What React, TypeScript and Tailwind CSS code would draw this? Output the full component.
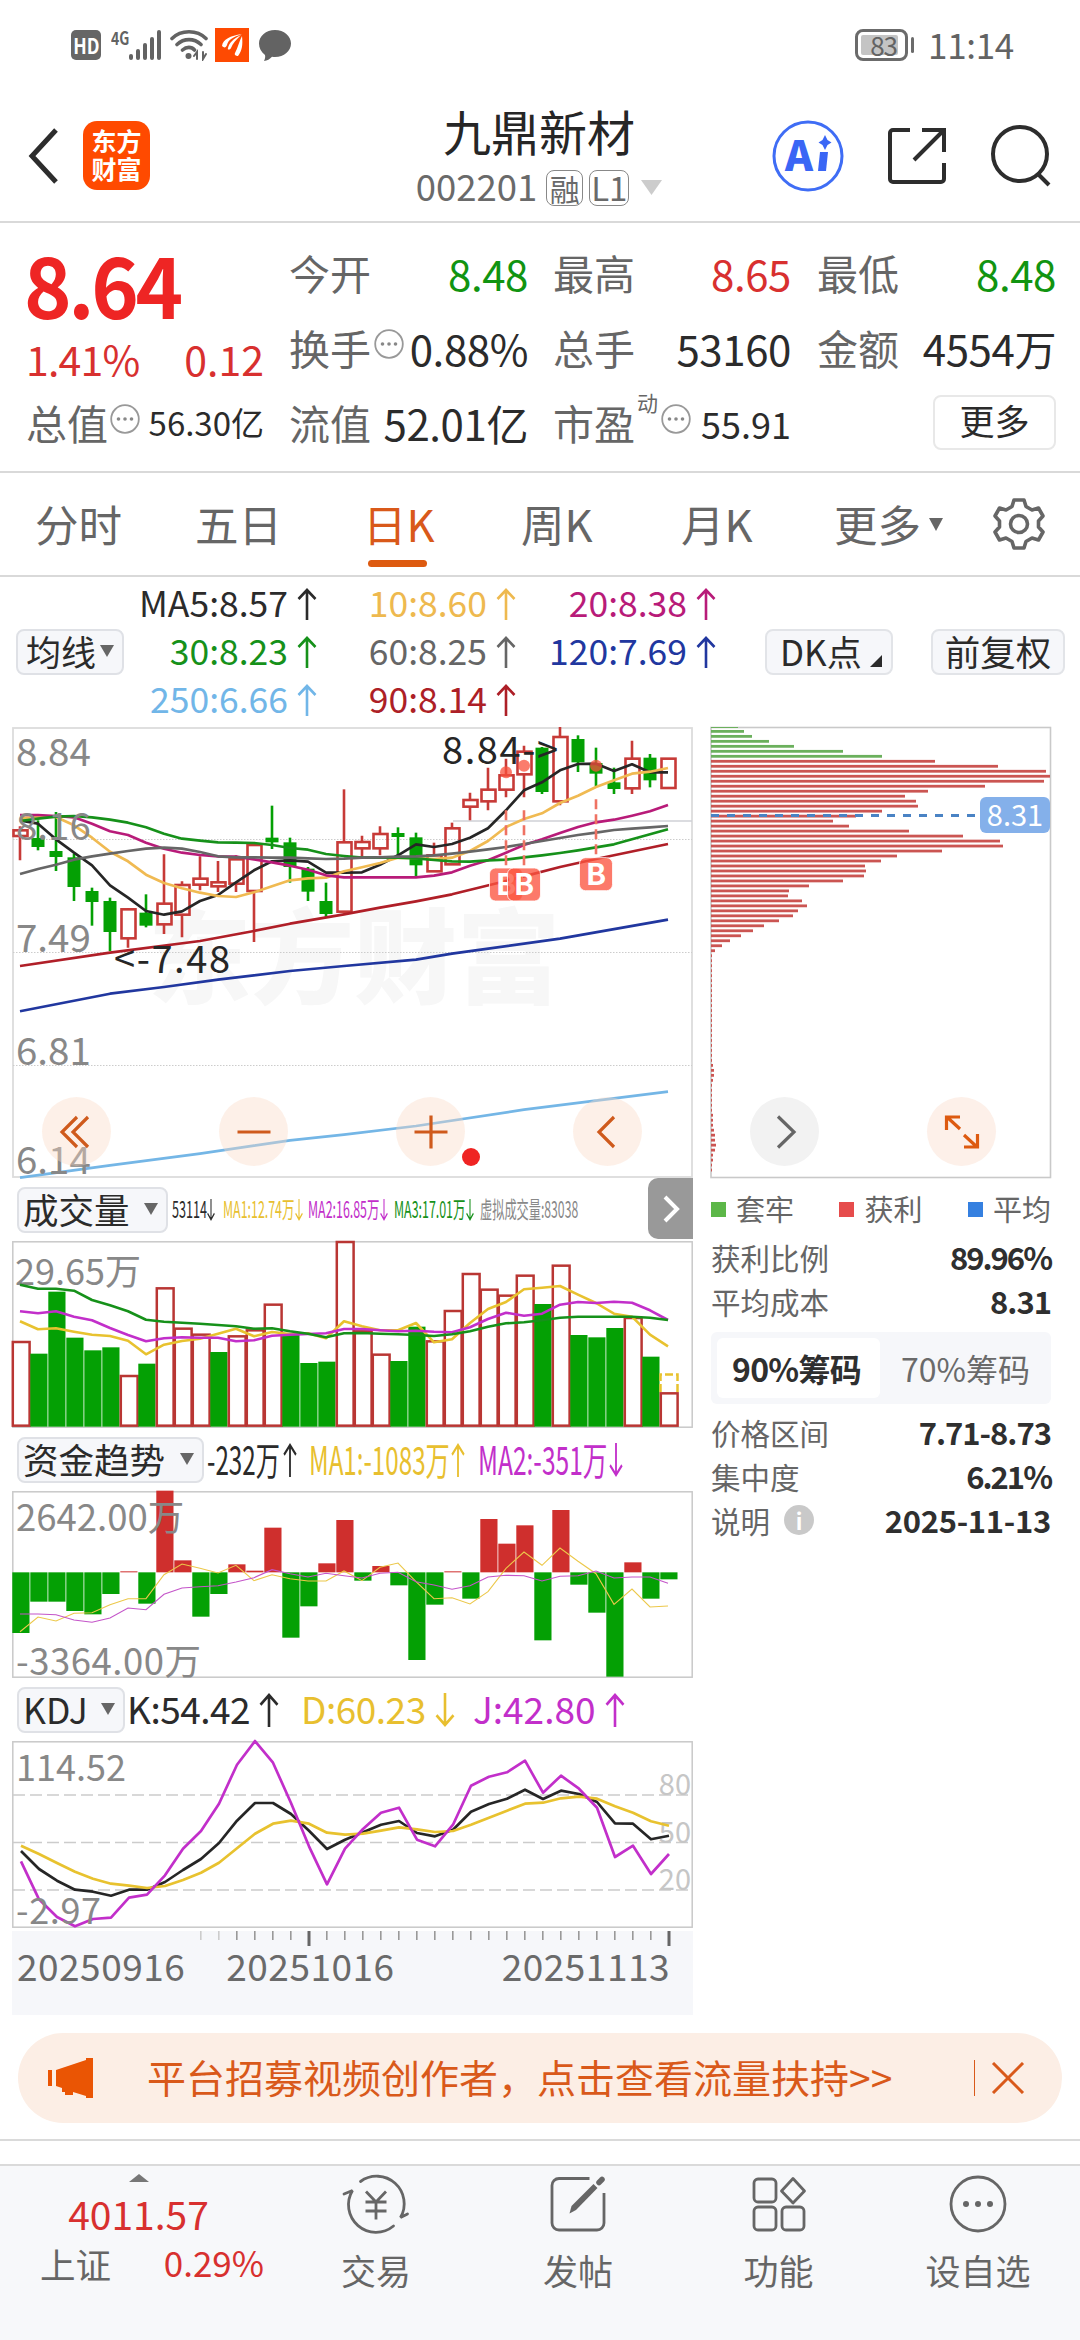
import type { ReactNode } from 'react';
import clsx from 'clsx';

const RED = '#c73a37';
const GREEN = '#04a004';
const STEP = 18;

// Chart samples are stored in thirds of a pixel, measured from an offset per chart
const scaleY = (v: number, top: number) => (v - top) / 3;
const scaleX = (i: number, x0 = 8) => x0 + i * STEP;

function toPoints(values: number[], top: number, x0?: number) {
  return values.map((v, i) => `${scaleX(i, x0)},${scaleY(v, top).toFixed(1)}`).join(' ');
}

function pairsToPoints(pairs: [number, number][], top: number) {
  return pairs.map(([i, v]) => `${scaleX(i)},${scaleY(v, top).toFixed(1)}`).join(' ');
}

// direction, high, body top, body bottom, low
type Candle = ['r' | 'g', number, number, number, number];

const candles: Candle[] = [
  ['r', 318, 330, 347, 420], ['g', 300, 353, 380, 390], ['g', 275, 392, 410, 452], ['g', 400, 411, 500, 542],
  ['g', 502, 512, 545, 616], ['g', 532, 542, 635, 692], ['r', 564, 567, 654, 682], ['g', 522, 577, 616, 621],
  ['r', 402, 550, 612, 641], ['r', 483, 494, 583, 651], ['r', 408, 475, 493, 510], ['r', 422, 486, 498, 515],
  ['r', 405, 417, 490, 515], ['r', 372, 374, 512, 665], ['g', 256, 352, 366, 386], ['g', 352, 366, 440, 487],
  ['g', 440, 445, 514, 542], ['g', 487, 542, 581, 592], ['r', 207, 366, 574, 574], ['r', 346, 365, 384, 410],
  ['r', 318, 341, 384, 405], ['g', 321, 338, 350, 405], ['g', 337, 351, 435, 467], ['r', 367, 405, 453, 453],
  ['r', 307, 324, 432, 432], ['r', 217, 239, 259, 300], ['r', 142, 208, 243, 270], ['r', 115, 165, 208, 231],
  ['r', 76, 94, 162, 231], ['g', 80, 82, 215, 221], ['r', 20, 50, 243, 255], ['g', 45, 56, 126, 155],
  ['g', 82, 128, 160, 198], ['g', 142, 186, 206, 221], ['r', 61, 115, 204, 221], ['g', 101, 112, 180, 201],
  ['r', 114, 115, 203, 203],
];

const ma5 = [300, 310, 357, 397, 435, 495, 532, 572, 583, 573, 542, 524, 486, 450, 423, 420, 424, 457, 457, 456, 433, 405, 372, 380, 371, 352, 324, 270, 210, 186, 150, 131, 130, 152, 132, 156, 156];
const ma10 = [293, 290, 290, 315, 352, 394, 423, 463, 488, 504, 517, 527, 530, 516, 498, 480, 474, 472, 453, 441, 428, 412, 413, 416, 412, 392, 362, 320, 296, 279, 248, 226, 200, 180, 160, 154, 143];
const ma20 = [284, 284, 287, 291, 310, 333, 344, 367, 385, 397, 404, 408, 409, 417, 426, 436, 448, 465, 471, 471, 471, 471, 471, 466, 456, 436, 420, 397, 374, 357, 338, 320, 306, 298, 286, 273, 254];
const ma30 = [302, 295, 289, 287, 291, 298, 307, 321, 340, 355, 361, 366, 367, 368, 374, 383, 388, 401, 407, 412, 411, 412, 414, 419, 423, 424, 420, 418, 411, 405, 398, 390, 381, 372, 357, 342, 327];
const ma60 = [461, 446, 433, 418, 408, 400, 392, 385, 382, 385, 395, 408, 411, 411, 412, 412, 414, 416, 415, 412, 411, 409, 408, 405, 400, 394, 387, 380, 371, 362, 353, 344, 337, 329, 325, 321, 317];
const ma90: [number, number][] = [[0, 737], [5, 697], [10, 662], [13, 632], [15, 610], [18, 582], [20, 562], [22, 543], [24, 522], [27, 482], [30, 440], [32, 416], [33, 405], [36, 371]];
const ma120: [number, number][] = [[0, 873], [5, 820], [8, 800], [11, 778], [15, 752], [18, 737], [22, 718], [24, 700], [30, 655], [36, 598]];
const ma250: [number, number][] = [[0, 1372], [5, 1335], [10, 1300], [13, 1276], [15, 1260], [18, 1243], [22, 1217], [28, 1168], [33, 1134], [36, 1114]];

const volumes: ['r' | 'g', number][] = [
  ['r', 487], ['g', 522], ['g', 336], ['g', 474], ['g', 512], ['g', 503], ['r', 589], ['g', 552], ['r', 326], ['r', 447],
  ['r', 465], ['g', 517], ['r', 470], ['r', 452], ['r', 375], ['g', 463], ['g', 550], ['g', 546], ['r', 187], ['r', 455],
  ['r', 525], ['g', 544], ['g', 441], ['r', 485], ['r', 394], ['r', 283], ['r', 330], ['r', 348], ['r', 288], ['g', 373],
  ['r', 258], ['g', 466], ['g', 473], ['g', 445], ['r', 415], ['g', 531], ['r', 641],
];
const volMa1 = [425, 449, 446, 456, 465, 469, 483, 524, 495, 484, 477, 462, 447, 470, 457, 463, 461, 476, 425, 440, 452, 452, 430, 488, 479, 430, 388, 367, 329, 324, 319, 345, 370, 402, 411, 465, 500];
const volMa2 = [395, 401, 395, 411, 422, 445, 466, 485, 476, 473, 474, 474, 485, 482, 468, 465, 463, 461, 448, 448, 452, 455, 453, 456, 458, 443, 418, 399, 408, 402, 375, 367, 370, 366, 369, 392, 421];
const volMa3 = [315, 327, 327, 333, 361, 377, 395, 420, 426, 429, 432, 436, 440, 447, 446, 455, 462, 473, 461, 460, 462, 464, 466, 469, 464, 455, 441, 431, 428, 422, 414, 411, 411, 411, 411, 414, 421];

const FUND_ZERO = 308;
const funds = [490, 396, 396, 424, 434, 373, 305, 402, 63, 272, 441, 373, 284, 303, 174, 504, 410, 281, 151, 333, 289, 347, 571, 405, 305, 387, 148, 222, 167, 512, 121, 345, 429, 621, 278, 387, 329];
const fundMa1 = [486, 442, 454, 431, 429, 405, 387, 387, 315, 283, 296, 310, 287, 333, 315, 327, 334, 334, 304, 333, 293, 280, 336, 387, 384, 403, 366, 296, 247, 287, 235, 275, 312, 404, 358, 412, 409];
const fundMa2 = [433, 433, 435, 451, 458, 445, 415, 420, 374, 355, 351, 348, 337, 324, 300, 312, 322, 311, 318, 325, 311, 308, 336, 346, 359, 348, 322, 317, 318, 334, 320, 318, 304, 325, 322, 322, 341];

const kLine = [484, 538, 573, 600, 606, 618, 600, 600, 577, 541, 508, 460, 393, 340, 340, 373, 423, 478, 450, 428, 405, 394, 430, 440, 420, 366, 343, 327, 300, 328, 303, 313, 337, 401, 402, 449, 438];
const dLine = [468, 493, 520, 546, 567, 582, 588, 595, 589, 571, 549, 519, 476, 432, 402, 393, 402, 429, 435, 432, 423, 413, 419, 427, 424, 405, 384, 363, 342, 339, 326, 321, 327, 350, 369, 395, 408];
const jLine = [515, 629, 682, 710, 688, 684, 624, 615, 557, 477, 424, 342, 225, 154, 219, 340, 470, 584, 477, 418, 369, 354, 450, 470, 405, 288, 261, 248, 213, 309, 258, 297, 354, 502, 468, 553, 493];

const chips = [
  27, 33, 41, 58, 83, 132, 171, 224, 287, 335, 339, 333, 274, 217, 194, 205, 207, 171, 145, 122, 138, 198, 252, 289, 292,
  231, 186, 170, 154, 155, 153, 132, 98, 78, 77, 91, 96, 87, 82, 68, 53, 42, 30, 19, 11, 4,
  1, 1, 1, 1, 1, 1, 1, 1, 1, 1, 1, 1, 1, 1, 1, 1, 1, 1, 1, 1, 1, 1, 2, 3, 3, 2, 1, 1, 1, 1, 1, 1, 2, 2, 2, 3, 4, 4, 5, 4, 2, 2, 1, 1,
];

function Arrow({ down, className }: { down?: boolean; className?: string }) {
  return (
    <svg viewBox="0 0 20 32" preserveAspectRatio="none" className={clsx('shrink-0', down && 'rotate-180', className ?? 'h-8 w-5')} fill="none" stroke="currentColor" strokeWidth="2.6">
      <path d="M10 32V2M1.5 11 10 2l8.5 9" />
    </svg>
  );
}

function Caret({ className }: { className?: string }) {
  return (
    <svg viewBox="0 0 14 12" preserveAspectRatio="none" className={clsx('shrink-0', className ?? 'h-3 w-3.5 text-[#666]')} fill="currentColor">
      <path d="M0 0h14L7 12z" />
    </svg>
  );
}

function MoreDots() {
  return (
    <svg viewBox="0 0 30 30" className="h-[30px] w-[30px] shrink-0" fill="none" stroke="#999" strokeWidth="1.8">
      <circle cx="15" cy="15" r="13.8" />
      <g fill="#888" stroke="none">
        <circle cx="8.5" cy="15" r="1.8" />
        <circle cx="15" cy="15" r="1.8" />
        <circle cx="21.5" cy="15" r="1.8" />
      </g>
    </svg>
  );
}

function StatusBar() {
  return (
    <div className="flex h-[90px] items-center pl-[71px] pr-[66px] text-[#636363]">
      <div className="flex h-[30px] w-[30px] items-center justify-center rounded-[5px] bg-[#666]">
        <span className="scale-x-[0.85] text-[21px] font-bold leading-none text-white">HD</span>
      </div>
      <span className="-mt-4 ml-[10px] inline-block w-[20px] origin-left scale-x-[0.78] text-[18px] font-bold leading-none">4G</span>
      <svg viewBox="0 0 33 31" className="-ml-[2px] h-[31px] w-[33px]" fill="currentColor">
        <rect x="0" y="24" width="4" height="6" rx="2" />
        <rect x="7" y="19" width="4" height="11" rx="2" />
        <rect x="14" y="13" width="4" height="17" rx="2" />
        <rect x="21" y="7" width="4" height="23" rx="2" />
        <rect x="28" y="0" width="4" height="30" rx="2" />
      </svg>
      <svg viewBox="0 0 38 32" className="ml-2 h-8 w-[38px]" fill="none" stroke="currentColor" strokeWidth="3.6" strokeLinecap="round">
        <path d="M2 9.5c9-9 25-9 34 0M7 15.5c7-6.5 17-6.5 24 0M12.5 21c4-3.5 9-3.5 12 0" />
        <circle cx="18.5" cy="27" r="3" fill="currentColor" stroke="none" />
        <path d="M24 27l3-4v7M36 25l-3 5v-7" strokeWidth="2" />
      </svg>
      <svg viewBox="0 0 34 34" className="ml-[7px] h-[34px] w-[34px]">
        <rect width="34" height="34" fill="#fe4a02" />
        <path d="M7 18C8 11 15 8 27 6 18 9 13 12 12 17c-1 3-3 3-5 1zM13 20c1-5 5-9 13-13-5 5-8 8-10 13-1 2-4 2-3 0zM20 25c3-6 4-11 7-17 1 9 0 15-4 20-2 0-4-1-3-3z" fill="#fff" />
      </svg>
      <svg viewBox="0 0 32 31" className="ml-[10px] h-[31px] w-8" fill="currentColor">
        <path d="M16 0c9 0 16 6 16 13.5S25 27 16 27c-1 0-2 0-3-.2C11 29 8 31 5 31c1-2 1.5-4 1-6-4-3-6-7-6-11.5C0 6 7 0 16 0z" />
      </svg>
      <div className="ml-auto flex items-center">
        <div className="flex h-8 w-[53px] items-center rounded-[8px] border-[3px] border-[#6b6b6b] p-[3px]">
          <div className="flex h-full w-[37px] items-center justify-center rounded-[2px] bg-[#c4c4c4] pl-2 text-[26px] leading-none tracking-[-1px]">83</div>
        </div>
        <div className="ml-[3px] h-4 w-[3px] rounded bg-[#6b6b6b]" />
        <span className="-mt-1 ml-[14px] text-[35px] leading-none tracking-[-0.3px]">11:14</span>
      </div>
    </div>
  );
}

function Header() {
  return (
    <header className="flex h-[133px] items-center border-b-2 border-[#d9d9d9] pl-7 pr-[28px]">
      <svg viewBox="0 0 30 56" className="h-[56px] w-[30px]" fill="none" stroke="#2d2d2d" strokeWidth="5">
        <path d="M28 2 4 28l24 26" />
      </svg>
      <div className="ml-[25px] flex h-[69px] w-[67px] flex-col items-center justify-center rounded-[14px] bg-[#ff4a00] pb-1 text-[25px] font-bold leading-[28px] text-white">
        <span>东方</span>
        <span>财富</span>
      </div>
      <div className="ml-[264px] flex w-[250px] flex-col items-center">
        <h1 className="-mt-1 text-[48px] leading-[60px] text-[#262626]">九鼎新材</h1>
        <div className="mt-[8px] flex h-10 items-center text-[#6a6a6a]">
          <span className="-mt-0.5 text-[36.5px] leading-none">002201</span>
          <span className="ml-[9px] flex h-9 w-[37px] items-center justify-center rounded-[8px] border-[1.5px] border-[#888] text-[30px] leading-none">融</span>
          <span className="ml-1.5 flex h-9 w-[40px] items-center justify-center rounded-[8px] border-[1.5px] border-[#888] text-[33px] leading-none">L1</span>
          <Caret className="ml-[12px] h-[15px] w-[21px] text-[#ccc]" />
        </div>
      </div>
      <svg viewBox="0 0 72 72" className="ml-[108px] h-[72px] w-[72px]">
        <circle cx="36" cy="36" r="34" fill="#fff" stroke="#3f6df5" strokeWidth="3" />
        <text x="13" y="51" fontSize="41" fontWeight="900" fill="#3a66f5" textLength="28" lengthAdjust="spacingAndGlyphs">A</text>
        <path d="M48 32h8l-2 19h-8z" fill="#3a66f5" />
        <path d="M53 15l2.5 5 4 2.5-4 2.5-2.5 5-2.5-5-4-2.5 4-2.5z" fill="#3a66f5" />
      </svg>
      <svg viewBox="0 0 60 60" className="ml-[42px] h-[60px] w-[60px]" fill="none" stroke="#2d2d2d" strokeWidth="4">
        <path d="M24 4H7a3 3 0 0 0-3 3v46a3 3 0 0 0 3 3h48a3 3 0 0 0 3-3V37M36 4h22v22M57 5 28 34" />
      </svg>
      <svg viewBox="0 0 62 62" className="ml-auto h-[62px] w-[62px]" fill="none" stroke="#2d2d2d" strokeWidth="4">
        <circle cx="30" cy="29" r="27" />
        <path d="M48 49l11 11" />
      </svg>
    </header>
  );
}

function Stat({ label, children, value, tone = 'text-[#2b2b2b]' }: { label: string; children?: ReactNode; value: string; tone?: string }) {
  return (
    <div className="flex h-[75px] items-center">
      <span className="text-[41px] text-[#666]">{label}</span>
      {children}
      <span className={clsx('ml-auto whitespace-nowrap text-[42px] tracking-[-0.4px]', tone)}>{value}</span>
    </div>
  );
}

function QuotePanel() {
  return (
    <section className="flex h-[250px] border-b-2 border-[#d9d9d9] pl-[26px] pt-[12px]">
      <div className="w-[238px]">
        <div className="-ml-0.5 h-[98px] origin-left scale-x-[0.95] text-[85px] font-bold leading-[94px] tracking-[-3.5px] text-[#ee2524]">8.64</div>
        <div className="flex h-[51px] items-center justify-between text-[41px] leading-none text-[#d8302f]">
          <span className="tracking-[-0.8px]">1.41%</span>
          <span>0.12</span>
        </div>
        <div className="flex h-[77px] items-center">
          <span className="text-[41px] text-[#666]">总值</span>
          <span className="-mt-2 ml-[2px]"><MoreDots /></span>
          <span className="ml-auto text-[33px] text-[#2b2b2b]">56.30亿</span>
        </div>
      </div>
      <div className="ml-[25px] w-[239px]">
        <Stat label="今开" value="8.48" tone="text-[#119411]" />
        <Stat label="换手" value="0.88%">
          <span className="-mt-2 ml-[3px] w-[30px]"><MoreDots /></span>
        </Stat>
        <Stat label="流值" value="52.01亿" />
      </div>
      <div className="ml-[25px] w-[238px]">
        <Stat label="最高" value="8.65" tone="text-[#d8302f]" />
        <Stat label="总手" value="53160" />
        <div className="flex h-[75px] items-center">
          <span className="text-[41px] text-[#666]">市盈</span>
          <span className="-mt-10 ml-[2px] text-[21px] text-[#666]">动</span>
          <span className="-mt-2 ml-[3px]"><MoreDots /></span>
          <span className="ml-auto text-[36px] text-[#2b2b2b]">55.91</span>
        </div>
      </div>
      <div className="ml-[26px] w-[239px]">
        <Stat label="最低" value="8.48" tone="text-[#119411]" />
        <Stat label="金额" value="4554万" />
        <button className="ml-auto mt-[10px] flex h-[55px] w-[123px] items-center justify-center rounded-[8px] border-2 border-[#e8e8e8] pb-1 text-[35px] text-[#2b2b2b]">更多</button>
      </div>
    </section>
  );
}

function PeriodTabs() {
  return (
    <nav className="flex h-[104px] items-center border-b-2 border-[#d9d9d9] pl-[35px] text-[43.5px] text-[#666]">
      <span className="w-[160px]">分时</span>
      <span className="w-[168px]">五日</span>
      <span className="relative w-[158px] text-[#d9591a]">
        日K
        <span className="absolute -bottom-[10px] left-[5px] h-[7px] w-[59px] rounded-full bg-[#dd5a10]" />
      </span>
      <span className="w-[160px]">周K</span>
      <span className="w-[153px]">月K</span>
      <span>更多</span>
      <Caret className="ml-2 h-[13px] w-3.5" />
      <svg viewBox="0 0 52 54" className="ml-[50px] h-[54px] w-[52px]" fill="none" stroke="#666" strokeWidth="3.6" strokeLinejoin="round">
        <path d="M21 3h10l2 6.5 6 3.5 6.5-2 4.5 8-4.5 5v6l4.5 5-4.5 8-6.5-2-6 3.5-2 6.5H21l-2-6.5-6-3.5-6.5 2L2 35l4.5-5v-6L2 19l4.5-8 6.5 2 6-3.5z" />
        <circle cx="26" cy="27" r="8.5" />
      </svg>
    </nav>
  );
}

const legend = [
  ['MA5:8.57', 'text-[#2b2b2b]'], ['10:8.60', 'text-[#eeb94f]'], ['20:8.38', 'text-[#b81b79]'],
  ['30:8.23', 'text-[#16911a]'], ['60:8.25', 'text-[#666]'], ['120:7.69', 'text-[#21379f]'],
  ['250:6.66', 'text-[#71b6e8]'], ['90:8.14', 'text-[#ad1f27]'],
];

function MaLegend() {
  return (
    <section className="flex h-[150px] items-center pl-4">
      <button className="flex h-[46px] w-[108px] items-center justify-center gap-1 rounded-[8px] border-2 border-[#dfe1e6] bg-[#f6f7fa] pb-0.5 text-[35px] text-[#2b2b2b]">
        均线
        <Caret />
      </button>
      <div className="grid w-[592px] grid-cols-[193px_199px_200px] text-[35.5px]">
        {legend.map(([text, tone]) => (
          <div key={text} className={clsx('flex h-12 items-center justify-end gap-[9px] leading-none', tone)}>
            <span className="-mt-1">{text}</span>
            <Arrow />
          </div>
        ))}
      </div>
      <button className="ml-[49px] flex h-[46px] w-[128px] items-center rounded-[8px] border-2 border-[#e2e4e8] bg-[#f6f7fa] pb-0.5 pl-[13px] text-[35px] text-[#2b2b2b]">
        DK点
        <svg viewBox="0 0 12 12" className="ml-2 mt-5 h-3 w-3" fill="currentColor"><path d="M12 0v12H0z" /></svg>
      </button>
      <button className="ml-[38px] flex h-[46px] w-[134px] items-center justify-center rounded-[8px] border-2 border-[#e2e4e8] bg-[#f6f7fa] pb-0.5 text-[35.5px] text-[#2b2b2b]">前复权</button>
    </section>
  );
}

function ChartButton({ className, children }: { className: string; children: ReactNode }) {
  return (
    <button className={clsx('absolute top-[370px] flex h-[69px] w-[69px] items-center justify-center rounded-full', className)}>
      <svg viewBox="0 0 40 40" className="h-10 w-10" fill="none" stroke="currentColor" strokeWidth="3.2">{children}</svg>
    </button>
  );
}

function PriceChart() {
  const top = 20;
  return (
    <div className="relative h-[451px]">
      <svg viewBox="0 0 681 451" className="h-full w-full overflow-visible">
        <rect x="1" y="1" width="679" height="449" fill="#fff" stroke="#dcdcdc" strokeWidth="1.8" />
        <text x="136" y="269" fontSize="103" fontWeight="900" fill="#f7f7f7">东方财富</text>
        {[112.5, 225.5, 338.5].map((y) => (
          <line key={y} x1="1" x2="680" y1={y} y2={y} stroke="#ccc" strokeWidth="1" strokeDasharray="1.5 1.5" />
        ))}
        <line x1="441" x2="680" y1="94" y2="94" stroke="#cfd1d6" strokeWidth="1.6" />
        {candles.map(([dir, high, t, b, low], i) => {
          const x = scaleX(i);
          const y1 = scaleY(t, top);
          const y2 = scaleY(b, top);
          if (dir === 'g') {
            return (
              <g key={i} fill={GREEN}>
                <rect x={x - 1.3} y={scaleY(high, top)} width="2.6" height={(low - high) / 3} />
                <rect x={x - 6.5} y={y1} width="13" height={y2 - y1} />
              </g>
            );
          }
          return (
            <g key={i} stroke={RED} strokeWidth="2.6" fill="none">
              <path d={`M${x} ${scaleY(high, top)}V${y1}M${x} ${y2}V${scaleY(low, top)}`} />
              <rect x={x - 6.5} y={y1} width="14" height={y2 - y1} />
            </g>
          );
        })}
        <g fill="none" strokeWidth="2.7" strokeLinejoin="round">
          <polyline points={toPoints(ma5, top)} stroke="#262626" />
          <polyline points={toPoints(ma10, top)} stroke="#f0ba52" />
          <polyline points={toPoints(ma20, top)} stroke="#b81b79" />
          <polyline points={toPoints(ma30, top)} stroke="#16911a" />
          <polyline points={toPoints(ma60, top)} stroke="#666" />
          <polyline points={pairsToPoints(ma90, top)} stroke="#b01f28" />
          <polyline points={pairsToPoints(ma120, top)} stroke="#21379f" />
          <polyline points={pairsToPoints(ma250, top)} stroke="#74b6e6" />
        </g>
        <g fill="#888" fontSize="38.5">
          <text x="4" y="39">8.84</text>
          <text x="4" y="113">8.16</text>
          <text x="4" y="225">7.49</text>
          <text x="4" y="338">6.81</text>
          <text x="4" y="447">6.14</text>
        </g>
        <g fill="#262626" fontSize="38">
          <text x="430" y="37" textLength="116">8.84-&gt;</text>
          <text x="102" y="246" textLength="116">&lt;-7.48</text>
        </g>
        {[[27, 156, 270, 443], [28, 136, 270, 443], [32, 136, 237, 412]].map(([i, dot, from, box]) => {
          const x = scaleX(i);
          const y = scaleY(box, top);
          return (
            <g key={i}>
              <line x1={x} x2={x} y1={scaleY(from, top)} y2={y} stroke="#ef7263" strokeWidth="2.6" strokeDasharray="10 5" />
              <circle cx={x} cy={scaleY(dot, top)} r="6" fill="#f9503c" fillOpacity="0.75" />
              <rect x={x - 16.5} y={y} width="33" height="33" rx="6" fill="#fb5540" fillOpacity="0.78" stroke="#fff" strokeWidth="0.8" />
              <text x={x} y={y + 27} textAnchor="middle" fontSize="30" fontWeight="700" fill="#fff">B</text>
            </g>
          );
        })}
        <circle cx="459" cy="430" r="9" fill="#ef2423" />
      </svg>
      <ChartButton className="left-[30px] bg-[#fbd9c6]/40 text-[#cf5a1c]"><path d="M20 5 5 20l15 15M31 5 16 20l15 15" /></ChartButton>
      <ChartButton className="left-[207px] bg-[#fbd9c6]/40 text-[#cf5a1c]"><path d="M3.5 20h33" /></ChartButton>
      <ChartButton className="left-[384px] bg-[#fbd9c6]/40 text-[#cf5a1c]"><path d="M3.5 20h33M20 3.5v33" /></ChartButton>
      <ChartButton className="left-[561px] bg-[#fbd9c6]/40 text-[#cf5a1c]"><path d="M26 5 11 20l15 15" /></ChartButton>
    </div>
  );
}

function IndicatorButton({ label, className }: { label: string; className: string }) {
  return (
    <button className={clsx('ml-[5px] flex h-[46px] shrink-0 items-center justify-between rounded-[8px] border-2 border-[#dfe1e6] bg-[#f6f7fa] pb-0.5 pl-1 pr-2 text-[35.5px] text-[#2b2b2b]', className)}>
      {label}
      <Caret />
    </button>
  );
}

// Narrowed text so that all readouts fit on a single row
function Readout({ text, className, textClass, down, arrow }: { text: string; className: string; textClass: string; down?: boolean; arrow?: string }) {
  return (
    <div className={clsx('flex items-center leading-none', className)}>
      <span className={clsx('-mt-[3px] inline-block whitespace-nowrap', textClass)}>{text}</span>
      {arrow && <Arrow down={down} className={arrow} />}
    </div>
  );
}

function VolumeChart() {
  const top = 184;
  const base = scaleY(738, top);
  return (
    <svg viewBox="0 0 681 187" className="block h-[187px] w-full overflow-visible">
      <rect x="0.8" y="0.8" width="679.4" height="185.4" fill="#fff" stroke="#c9c9c9" strokeWidth="1.5" />
      <text x="3" y="44" fontSize="36" fill="#888">29.65万</text>
      {volumes.map(([dir, v], i) => {
        const x = scaleX(i) - 7.7;
        const y = scaleY(v, top);
        return dir === 'g'
          ? <rect key={i} x={x} y={y} width="17.2" height={base - y + 1} fill={GREEN} />
          : <rect key={i} x={x + 0.5} y={y} width="16.8" height={base - y} fill="#fff" stroke="#b93633" strokeWidth="2.5" />;
      })}
      <path d="M648.5 151v-17.5h17v17.5" fill="none" stroke="#e8c22f" strokeWidth="2.5" strokeDasharray="8 3" />
      <g fill="none" strokeWidth="2.6" strokeLinejoin="round">
        <polyline points={toPoints(volMa1, top)} stroke="#e8c22f" />
        <polyline points={toPoints(volMa2, top)} stroke="#c22fca" />
        <polyline points={toPoints(volMa3, top)} stroke="#16911a" />
      </g>
    </svg>
  );
}

function FundChart() {
  const top = 64;
  const zero = scaleY(FUND_ZERO, top);
  return (
    <svg viewBox="0 0 681 187" className="block h-[187px] w-full overflow-visible">
      <rect x="0.8" y="0.8" width="679.4" height="185.4" fill="#fff" stroke="#c9c9c9" strokeWidth="1.5" />
      {funds.map((v, i) => {
        const y = scaleY(v, top);
        return (
          <rect key={i} x={scaleX(i) - 7.7} y={Math.min(y, zero)} width="17.2" height={Math.abs(y - zero)} fill={v < FUND_ZERO ? '#cf2f2d' : GREEN} />
        );
      })}
      <polyline points={toPoints(fundMa1, top)} fill="none" stroke="#ecc84a" strokeWidth="1.1" />
      <polyline points={toPoints(fundMa2, top)} fill="none" stroke="#c455c9" strokeWidth="1.1" />
      <g fontSize="36.5" fill="#888">
        <text x="4" y="40">2642.00万</text>
        <text x="4" y="184" textLength="185">-3364.00万</text>
      </g>
    </svg>
  );
}

function KdjChart() {
  const top = 154;
  return (
    <svg viewBox="0 0 681 187" className="block h-[187px] w-full overflow-visible">
      <rect x="0.8" y="0.8" width="679.4" height="185.4" fill="#fff" stroke="#c9c9c9" strokeWidth="1.5" />
      {[['80', 54], ['50', 101.5], ['20', 149]].map(([label, y]) => (
        <g key={label}>
          <line x1="1" x2="680" y1={y} y2={y} stroke="#ccc" strokeWidth="1.3" strokeDasharray="12 5" />
          <text x="679" y={y} textAnchor="end" fontSize="29" fill="#c6c6c6">{label}</text>
        </g>
      ))}
      <g fill="none" strokeWidth="2.7" strokeLinejoin="round">
        <polyline points={toPoints(kLine, top, 9)} stroke="#262626" />
        <polyline points={toPoints(dLine, top, 9)} stroke="#e8c22f" />
        <polyline points={toPoints(jLine, top, 9)} stroke="#c22fca" />
      </g>
      <g fontSize="36" fill="#888">
        <text x="4" y="40">114.52</text>
        <text x="4" y="183" textLength="85">-2.97</text>
      </g>
    </svg>
  );
}

function DateAxis() {
  const ticks = Array.from({ length: 27 }, (_, k) => k + 10);
  return (
    <div className="mt-[3px] h-[84px] bg-[#f6f7fa]">
      <svg viewBox="0 0 681 16" className="block h-4 w-full">
        {ticks.map((i) => {
          const major = i === 16 || i === 36;
          return <rect key={i} x={scaleX(i) + (major ? -0.5 : 0)} width={major ? 3 : 1.6} height={major ? 15 : 9} fill={major ? '#666' : i < 12 ? '#ccc' : '#999'} />;
        })}
      </svg>
      <div className="flex pl-[5px] pr-[23px] text-[37px] leading-[36px] tracking-[0.5px] text-[#6a6a6a]">
        <span>20250916</span>
        <span className="ml-[41px]">20251016</span>
        <span className="ml-auto">20251113</span>
      </div>
    </div>
  );
}

function ChipChart() {
  return (
    <div className="relative h-[451px]">
      <svg viewBox="0 0 340 451" className="h-full w-full overflow-visible">
        <rect x="0" y="0.5" width="339.5" height="450" fill="#fff" stroke="#c9c9c9" strokeWidth="1.6" />
        {chips.map((w, i) => (
          <rect key={i} x="0" y={i === 0 ? 0 : i * 4.985 - 2} width={w} height={i === 0 ? 1 : 2.8} fill={i < 7 ? '#6bb05c' : '#cb5552'} />
        ))}
        <line x1="0" x2="264" y1="88.5" y2="88.5" stroke="#4a83c4" strokeWidth="2.8" strokeDasharray="8 8" />
        <rect x="269" y="70" width="70" height="36" rx="6" fill="#84b0ea" />
        <text x="304" y="99" textAnchor="middle" fontSize="29" fill="#fff">8.31</text>
      </svg>
      <ChartButton className="left-[39px] bg-[#f2f2f2] text-[#666]"><path d="M13 4.5 29 20 13 35.5" /></ChartButton>
      <ChartButton className="left-[216px] bg-[#fdf0e9] text-[#dd5a10]"><path d="M4.5 18V5H18M5 5l13 12M35.5 22v13H22M35 35 22 23" /></ChartButton>
    </div>
  );
}

function ChipRow({ label, value, info, tracking = 'tracking-[-1px]' }: { label: string; value: string; info?: boolean; tracking?: string }) {
  return (
    <div className="flex h-11 items-center text-[29.5px] text-[#666]">
      {label}
      {info && <span className="ml-3.5 flex h-[30px] w-[30px] items-center justify-center rounded-full bg-[#c9c9c9] text-[22px] font-bold leading-none text-white">i</span>}
      <span className={clsx('ml-auto text-[31px] font-bold text-[#2f2f2f]', tracking)}>{value}</span>
    </div>
  );
}

function ChipPanel() {
  return (
    <aside className="w-[340px]">
      <ChipChart />
      <div className="mt-[7px] flex h-12 items-center justify-between text-[29px] text-[#666]">
        <span className="flex items-center gap-[10px]"><i className="h-[15px] w-[15px] bg-[#5cb748]" />套牢</span>
        <span className="flex items-center gap-[10px]"><i className="h-[15px] w-[15px] bg-[#e64c4c]" />获利</span>
        <span className="flex items-center gap-[10px]"><i className="h-[15px] w-[15px] bg-[#3580e0]" />平均</span>
      </div>
      <div className="mt-0.5">
        <ChipRow label="获利比例" value="89.96%" tracking="tracking-[-2px]" />
        <ChipRow label="平均成本" value="8.31" />
      </div>
      <div className="mt-[9px] flex h-[72px] items-center rounded-[6px] bg-[#f6f7fa] p-1.5 text-[32px]">
        <span className="flex h-[60px] w-[163px] items-center justify-center rounded-[6px] bg-white pr-1 font-bold tracking-[-0.7px] text-[#2f2f2f]">90%筹码</span>
        <span className="flex-1 pl-1.5 text-center text-[32px] text-[#6a6a6a]">70%筹码</span>
      </div>
      <div className="mt-1.5">
        <ChipRow label="价格区间" value="7.71-8.73" />
        <ChipRow label="集中度" value="6.21%" tracking="tracking-[-2px]" />
        <ChipRow label="说明" value="2025-11-13" info tracking="tracking-[-0.3px]" />
      </div>
    </aside>
  );
}

function Charts() {
  return (
    <section className="flex gap-[18px] pl-3">
      <div className="w-[681px]">
        <PriceChart />
        <div className="flex h-[63px] items-center">
          <IndicatorButton label="成交量" className="w-[151px]" />
          <div className="flex items-center text-[23px]">
            <Readout text="53114" className="ml-1 w-[51px] text-[#2b2b2b]" textClass="w-[35px] origin-left scale-x-[0.55]" arrow="h-[22px] w-2" down />
            <Readout text="MA1:12.74万" className="w-[85px] text-[#e8bf2f]" textClass="w-[72px] origin-left scale-x-[0.54]" arrow="h-[22px] w-2" down />
            <Readout text="MA2:16.85万" className="w-[86px] text-[#c22fca]" textClass="w-[72px] origin-left scale-x-[0.54]" arrow="h-[22px] w-2" down />
            <Readout text="MA3:17.01万" className="w-[86px] text-[#16911a]" textClass="w-[72px] origin-left scale-x-[0.54]" arrow="h-[22px] w-2" down />
            <Readout text="虚拟成交量:83038" className="w-[100px] text-[#888]" textClass="w-[98px] origin-left scale-x-[0.53]" />
          </div>
          <button className="-mt-0.5 ml-auto flex h-[61px] w-[45px] items-center justify-center rounded-l-[10px] bg-[#999]">
            <svg viewBox="0 0 18 28" className="h-7 w-[18px]" fill="none" stroke="#fff" strokeWidth="4"><path d="M3 2l12 12L3 26" /></svg>
          </button>
        </div>
        <VolumeChart />
        <div className="flex h-[63px] items-center text-[39px]">
          <IndicatorButton label="资金趋势" className="w-[187px]" />
          <Readout text="-232万" className="ml-[3px] w-[102px] text-[#2b2b2b]" textClass="w-[76px] origin-left scale-x-[0.62]" arrow="h-[34px] w-3.5" />
          <Readout text="MA1:-1083万" className="w-[169px] text-[#e8bf2f]" textClass="w-[142px] origin-left scale-x-[0.62]" arrow="h-[34px] w-3.5" />
          <Readout text="MA2:-351万" className="text-[#c22fca]" textClass="w-[131px] origin-left scale-x-[0.63]" arrow="h-[34px] w-3.5" down />
        </div>
        <FundChart />
        <div className="flex h-[63px] items-center text-[37px]">
          <IndicatorButton label="KDJ" className="w-[108px]" />
          <Readout text="K:54.42" className="ml-0.5 w-[174px] gap-[9px] text-[#2b2b2b]" textClass="tracking-[-0.5px]" arrow="h-[34px] w-5" />
          <Readout text="D:60.23" className="w-[172px] gap-[9px] text-[#e8bf2f]" textClass="tracking-[-0.5px]" arrow="h-[34px] w-5" down />
          <Readout text="J:42.80" className="gap-[9px] text-[#c22fca]" textClass="" arrow="h-[34px] w-5" />
        </div>
        <KdjChart />
        <DateAxis />
      </div>
      <ChipPanel />
    </section>
  );
}

function Banner() {
  return (
    <div className="mx-[18px] mt-[18px] flex h-[90px] items-center rounded-full bg-[#fceee5] pl-[30px] pr-[37px] text-[#d9591a]">
      <svg viewBox="0 0 46 40" className="h-10 w-[46px]" fill="#ea5504">
        <path d="M0 12h4v16H0zM8 12 38 2V0h7v40h-7v-2l-13-4v3h-8v-3h-3v-4l-6-2z" />
      </svg>
      <span className="-mt-1 ml-[53px] text-[39px]">平台招募视频创作者，点击查看流量扶持&gt;&gt;</span>
      <span className="ml-auto h-9 w-[1.5px] bg-[#d9591a]" />
      <svg viewBox="0 0 34 32" className="ml-4 h-8 w-[34px]" fill="none" stroke="currentColor" strokeWidth="3"><path d="M2 1l30 30M32 1 2 31" /></svg>
    </div>
  );
}

function NavItem({ label, children, className }: { label: string; children: ReactNode; className: string }) {
  return (
    <div className={clsx('flex flex-col items-center', className)}>
      <svg viewBox="0 0 64 64" className="mt-1.5 h-16 w-16 overflow-visible" fill="none" stroke="#666" strokeWidth="2.8">{children}</svg>
      <span className="mt-[9px] text-[35px] leading-[50px] text-[#666]">{label}</span>
    </div>
  );
}

function BottomNav() {
  return (
    <footer className="flex h-[176px] border-t-2 border-[#dadada] bg-[#f7f8fa]">
      <div className="flex w-[277px] flex-col items-center text-[#d8302f]">
        <Caret className="mt-2 h-2 w-5 rotate-180 text-[#777]" />
        <span className="mt-[6px] text-[39px] leading-[50px]">4011.57</span>
        <div className="mt-0.5 flex h-[48px] w-full items-center justify-between pl-10 pr-[13px]">
          <span className="text-[35.5px] text-[#666]">上证</span>
          <span className="-mt-1 text-[35px]">0.29%</span>
        </div>
      </div>
      <NavItem label="交易" className="w-[198px]">
        <path d="M16.5 9.5A27.5 27.5 0 0 1 56.5 45.500L63.500 42M49.500 54A27.500 27.500 0 0 1 8.500 18.500L0 22" strokeLinejoin="bevel" strokeLinecap="round" />
        <path d="M22 19.500l10 10.500 10-10.500M32 30v17.500M21.500 30h21M21.500 39h21" />
      </NavItem>
      <NavItem label="发帖" className="w-[206px]">
        <path d="M43.5 6.500H13a7 7 0 0 0-7 7v37.500a7 7 0 0 0 7 7h38a7 7 0 0 0 7-7V21" />
        <path d="M23.500 41.500l2-7.500L47.500 12l4 4L30 38z" fill="#666" stroke="none" />
        <path d="M53 10.500l3-3" strokeWidth="5.5" strokeLinecap="round" />
      </NavItem>
      <NavItem label="功能" className="w-[195px]">
        <rect x="7" y="7" width="22" height="23" rx="4" />
        <rect x="7" y="35" width="22" height="23" rx="4" />
        <rect x="35" y="35" width="22" height="23" rx="4" />
        <path d="M46 6.5 57.5 19 46 31 34.5 19z" strokeLinejoin="round" />
      </NavItem>
      <NavItem label="设自选" className="w-[204px]">
        <circle cx="32" cy="32" r="27" />
        <g fill="#666" stroke="none">
          <circle cx="20" cy="32" r="3" />
          <circle cx="32" cy="32" r="3" />
          <circle cx="44" cy="32" r="3" />
        </g>
      </NavItem>
    </footer>
  );
}

export default function App() {
  return (
    <div className="flex h-[2340px] w-[1080px] flex-col overflow-hidden bg-white font-['Noto_Sans_CJK_SC',sans-serif]">
      <StatusBar />
      <Header />
      <QuotePanel />
      <PeriodTabs />
      <MaLegend />
      <Charts />
      <Banner />
      <div className="mt-4 border-t-2 border-[#dadada]" />
      <div className="mt-auto">
        <BottomNav />
      </div>
    </div>
  );
}
